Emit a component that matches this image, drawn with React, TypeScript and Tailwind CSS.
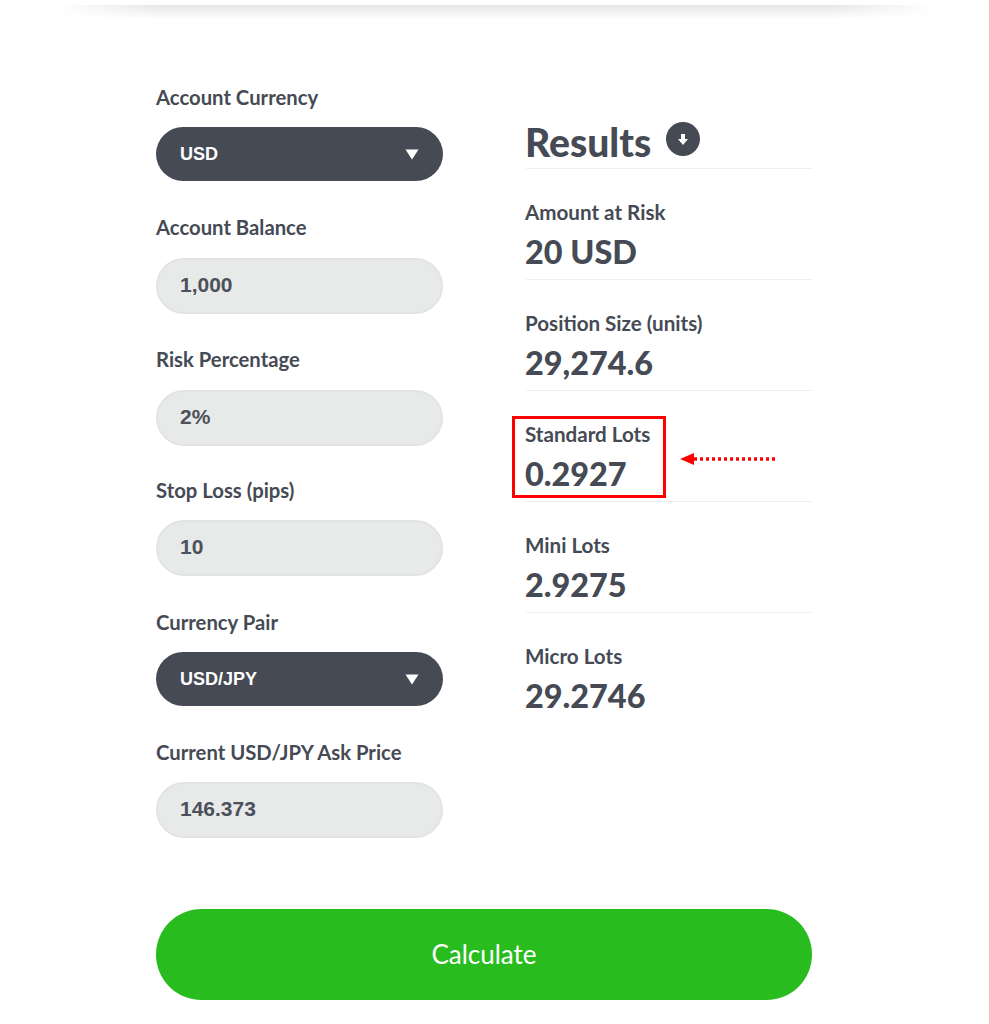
const fieldLabel = "h-6 text-[20.3px] leading-[22px] font-bold text-[#454a54] font-['Lato',sans-serif]";
const pill = "w-full flex items-center pl-6 font-['Liberation_Sans',sans-serif] font-bold rounded-full";

const Select = ({ value }: { value: string }) => (
  <div className={`${pill} h-[54px] pr-6 justify-between bg-[#454a54] text-white text-[18px]`}>
    <span>{value}</span>
    <svg width="14" height="11" viewBox="0 0 14 11" className="fill-white">
      <polygon points="0.5,0.5 13.5,0.5 7,10.5" />
    </svg>
  </div>
);

const Input = ({ value }: { value: string }) => (
  <div className={`${pill} h-14 pb-[2px] bg-[#e8e9e9] border-2 border-[#e2e3e3] pl-[22px] text-[#4c505a] text-[21px]`}>
    {value}
  </div>
);

const results = [
  { label: "Amount at Risk", value: "20 USD" },
  { label: "Position Size (units)", value: "29,274.6" },
  { label: "Standard Lots", value: "0.2927", marked: true },
  { label: "Mini Lots", value: "2.9275" },
  { label: "Micro Lots", value: "29.2746" },
];

const ResultRow = ({ label, value, marked, last }: { label: string; value: string; marked?: boolean; last: boolean }) => (
  <div className={`relative pt-[31px] pb-[10px] ${last ? "" : "border-b border-[#eeeff0]"}`}>
    <div className="-ml-px h-[26px] text-[20.6px] leading-[24px] font-bold text-[#454a54] font-['Lato',sans-serif]">{label}</div>
    <div className="-ml-px mt-[9px] h-[34px] text-[32.4px] leading-[34px] font-black text-[#454a54] font-['Lato',sans-serif]">{value}</div>
    {marked && (
      <>
        {/* red callout over the row */}
        <div className="absolute left-[-14px] top-[25px] w-[154px] h-[82px] border-[3px] border-[#ff0000]" />
        <svg width="96" height="12" viewBox="0 0 96 12" className="absolute left-[154px] top-[62px]">
          <polygon points="0,6 14,0 14,12" fill="#ff0000" />
          <line x1="14" y1="6" x2="95" y2="6" stroke="#ff0000" strokeWidth="3.5" strokeDasharray="3 3" />
        </svg>
      </>
    )}
  </div>
);

export default function App() {
  return (
    <div className="w-[989px] h-[1024px] bg-white overflow-hidden pt-[5px]">
      {/* faded shadow of the header above */}
      <div className="mx-auto w-[880px] h-[14px] bg-gradient-to-b from-[#e4e5e6] to-white [mask-image:linear-gradient(to_right,transparent,black_12%,black_88%,transparent)]" />

      <div className="w-[656px] ml-[156px] mt-[67px]">
        <div className="flex justify-between">
          {/* 🔹 Left Side: form */}
          <div className="w-[287px] flex flex-col">
            <div className={`${fieldLabel} mb-[17px]`}>Account Currency</div>
            <Select value="USD" />
            <div className={`${fieldLabel} mt-[35px] mb-[18px]`}>Account Balance</div>
            <Input value="1,000" />
            <div className={`${fieldLabel} mt-[34px] mb-[18px]`}>Risk Percentage</div>
            <Input value="2%" />
            <div className={`${fieldLabel} mt-[33px] mb-[17px]`}>Stop Loss (pips)</div>
            <Input value="10" />
            <div className={`${fieldLabel} mt-[35px] mb-[17px]`}>Currency Pair</div>
            <Select value="USD/JPY" />
            <div className={`${fieldLabel} mt-[35px] mb-[17px]`}>Current USD/JPY Ask Price</div>
            <Input value="146.373" />
          </div>

          {/* 🔹 Right Side: results */}
          <div className="w-[286px] pt-[30px]">
            <div className="h-[53px] flex items-start gap-[15px] border-b border-[#eeeff0]">
              <span className="-ml-px text-[39px] leading-[52px] font-black text-[#454a54] font-['Lato',sans-serif]">Results</span>
              <span className="mt-[6px] w-[34px] h-[34px] rounded-full bg-[#454a54] flex items-center justify-center">
                <svg width="10" height="11" viewBox="0 0 10 11" className="fill-white">
                  <polygon points="3,0 7,0 7,5 10,5 5,11 0,5 3,5" />
                </svg>
              </span>
            </div>
            {results.map((r, i) => (
              <ResultRow key={r.label} {...r} last={i === results.length - 1} />
            ))}
          </div>
        </div>

        <div className="mt-[71px] h-[91px] rounded-full bg-[#29bc1f] flex items-center justify-center text-white text-[26px] font-['Lato',sans-serif]">
          Calculate
        </div>
      </div>
    </div>
  );
}
